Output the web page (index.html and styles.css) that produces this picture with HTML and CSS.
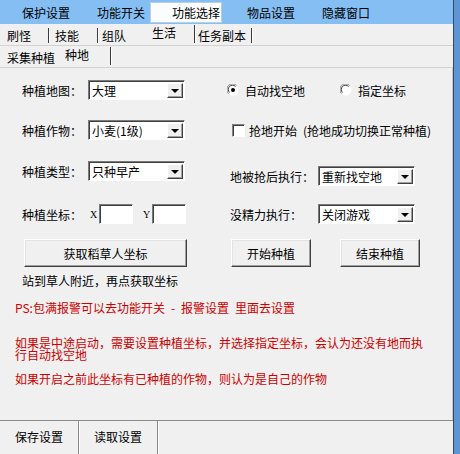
FILE: index.html
```html
<!DOCTYPE html>
<html lang="zh-CN">
<head>
    <meta charset="UTF-8">
    <title>种地</title>
    <link rel="stylesheet" href="styles.css">
</head>
<body>
<div class="frame">
    <div class="app">
        <div class="menubar">
            <span class="menu-item">保护设置</span>
            <span class="menu-item menu-item-tight">功能开关</span>
            <span class="menu-item active">功能选择</span>
            <span class="menu-item">物品设置</span>
            <span class="menu-item">隐藏窗口</span>
        </div>

        <div class="tabrow">
            <span class="tab t1">刷怪</span>
            <span class="tab t2">技能</span>
            <span class="tab t3 no-sep">组队</span>
            <span class="tab t4 selected">生活</span>
            <span class="tab t5">任务副本</span>
        </div>

        <div class="tabrow">
            <span class="tab s1 no-sep">采集种植</span>
            <span class="tab s2 selected">种地</span>
        </div>

        <div class="panel">
            <div class="row r1">
                <div class="cell-left">
                    <span class="label">种植地图：</span>
                    <div class="combo"><span class="combo-text">大理</span><span class="combo-btn"><i class="arrow"></i></span></div>
                </div>
                <div class="cell-right radios">
                    <span class="option">
                        <svg class="radio" width="12" height="12" viewBox="0 0 12 12">
                            <circle cx="6" cy="6" r="5.5" fill="#fff"/>
                            <path d="M1.5 9.5 A5.5 5.5 0 0 1 9.5 1.5" fill="none" stroke="#808080"/>
                            <path d="M2.5 8.5 A4.2 4.2 0 0 1 8.5 2.5" fill="none" stroke="#404040"/>
                            <circle cx="6" cy="6" r="2" fill="#000"/>
                        </svg>
                        自动找空地
                    </span>
                    <span class="option second">
                        <svg class="radio" width="12" height="12" viewBox="0 0 12 12">
                            <circle cx="6" cy="6" r="5.5" fill="#fff"/>
                            <path d="M1.5 9.5 A5.5 5.5 0 0 1 9.5 1.5" fill="none" stroke="#808080"/>
                            <path d="M2.5 8.5 A4.2 4.2 0 0 1 8.5 2.5" fill="none" stroke="#404040"/>
                        </svg>
                        指定坐标
                    </span>
                </div>
            </div>

            <div class="row r2">
                <div class="cell-left">
                    <span class="label">种植作物：</span>
                    <div class="combo"><span class="combo-text">小麦(1级)</span><span class="combo-btn"><i class="arrow"></i></span></div>
                </div>
                <div class="cell-right">
                    <span class="option check">
                        <span class="checkbox"></span>
                        抢地开始&ensp;(抢地成功切换正常种植)
                    </span>
                </div>
            </div>

            <div class="row r3">
                <div class="cell-left">
                    <span class="label">种植类型：</span>
                    <div class="combo"><span class="combo-text">只种早产</span><span class="combo-btn"><i class="arrow"></i></span></div>
                </div>
                <div class="cell-right shift">
                    <span class="label wide">地被抢后执行：</span>
                    <div class="combo"><span class="combo-text">重新找空地</span><span class="combo-btn"><i class="arrow"></i></span></div>
                </div>
            </div>

            <div class="row r4">
                <div class="cell-left">
                    <span class="label">种植坐标：</span>
                    <span class="axis">X</span>
                    <span class="field"></span>
                    <span class="axis axis-y">Y</span>
                    <span class="field"></span>
                </div>
                <div class="cell-right">
                    <span class="label wide">没精力执行：</span>
                    <div class="combo"><span class="combo-text">关闭游戏</span><span class="combo-btn"><i class="arrow"></i></span></div>
                </div>
            </div>

            <div class="row buttons">
                <div class="cell-left">
                    <button class="btn btn-long">获取稻草人坐标</button>
                </div>
                <div class="cell-right">
                    <button class="btn btn-small">开始种植</button>
                    <button class="btn btn-small btn-gap">结束种植</button>
                </div>
            </div>

            <p class="hint">站到草人附近，再点获取坐标</p>

            <div class="notes">
                <p class="note ps">PS:包满报警可以去功能开关&ensp;-&ensp;报警设置&ensp;里面去设置</p>
                <p class="note n2">如果是中途启动，需要设置种植坐标，并选择指定坐标，会认为还没有地而执行自动找空地</p>
                <p class="note n3">如果开启之前此坐标有已种植的作物，则认为是自己的作物</p>
            </div>
        </div>

        <div class="bottombar">
            <span class="bottom-tab">保存设置</span>
            <span class="bottom-tab">读取设置</span>
        </div>
    </div>
    <div class="edge"></div>
</div>
</body>
</html>
```

FILE: styles.css
```css
* {
    margin: 0;
    padding: 0;
    box-sizing: border-box;
}

body {
    font-family: "Noto Sans CJK SC", "Noto Sans", sans-serif;
    font-size: 12px;
    color: #000;
    background: #f0f0f0;
    width: 460px;
    height: 454px;
    overflow: hidden;
}

.frame {
    display: flex;
    width: 460px;
    height: 454px;
}

.app {
    width: 453px;
    display: flex;
    flex-direction: column;
    background: #f0f0f0;
}

.edge {
    width: 7px;
    background: #5f95d3;
    border-left: 1px solid #2f4b6c;
}

/* top menu */
.menubar {
    height: 24px;
    background: #85bef3;
    display: flex;
    align-items: center;
    padding-left: 22px;
}

.menu-item {
    line-height: 21px;
    margin-right: 27px;
}

.menu-item-tight {
    margin-right: 5px;
}

.menu-item.active {
    background: #fbfcfd;
    border: 1px solid #b9cfe4;
    padding: 0 1px 0 21px;
    height: 21px;
    line-height: 19px;
    margin-right: 25px;
}

/* tab rows */
.tabrow {
    height: 22px;
    display: flex;
    align-items: flex-end;
    border-bottom: 1px solid #d2d2d2;
    padding-bottom: 2px;
}

.tab {
    height: 15px;
    line-height: 16px;
    border-right: 1px solid #3a3a3a;
    box-shadow: 1px 0 0 #fff;
}

.tab.no-sep {
    border-right-color: transparent;
    box-shadow: none;
}

.tab.selected {
    height: 18px;
    line-height: 15px;
    padding-bottom: 3px;
}

.t1 { width: 49px; padding-left: 7px; }
.t2 { width: 49px; padding-left: 6px; }
.t3 { width: 49px; padding-left: 4px; }
.t4 { width: 48px; padding-left: 5px; }
.t5 { width: 57px; padding-left: 3px; }

.s1 { width: 62px; padding-left: 7px; }
.s2 { width: 49px; padding-left: 3px; }

/* main panel */
.panel {
    flex: 1;
    padding-top: 12px;
    border-right: 1px solid #c8c8c8;
}

.row {
    display: flex;
    height: 20px;
    padding-left: 22px;
}

.r2 { margin-top: 20px; }
.r3 { margin-top: 21px; }
.r4 { margin-top: 23px; }

.cell-left {
    width: 208px;
    display: flex;
    align-items: center;
}

.cell-right {
    flex: 1;
    display: flex;
    align-items: center;
    height: 20px;
}

.cell-right.shift {
    margin-top: 5px;
}

.label {
    width: 66px;
    white-space: nowrap;
}

.label.wide {
    width: 88px;
}

/* combo box */
.combo {
    width: 97px;
    height: 20px;
    background: #fff;
    border: 1px solid;
    border-color: #7a7a7a #fff #fff #7a7a7a;
    box-shadow: inset 1px 1px 0 #404040;
    display: flex;
    align-items: center;
    justify-content: space-between;
    padding: 2px 1px 1px 3px;
}

.combo-text {
    line-height: 15px;
    white-space: nowrap;
}

.combo-btn {
    width: 16px;
    height: 15px;
    background: #f0f0f0;
    border: 1px solid;
    border-color: #fff #404040 #404040 #fff;
    box-shadow: inset -1px -1px 0 #a0a0a0;
    display: flex;
    align-items: center;
    justify-content: center;
}

.arrow {
    width: 0;
    height: 0;
    border-left: 4px solid transparent;
    border-right: 4px solid transparent;
    border-top: 4px solid #000;
    margin-top: 1px;
}

/* radios and checkbox */
.radios {
    margin-left: -3px;
}

.option {
    display: flex;
    align-items: center;
    white-space: nowrap;
}

.radio {
    margin-right: 6px;
}

.option.second {
    margin-left: 35px;
}

.option.check {
    margin-left: 2px;
}

.checkbox {
    width: 13px;
    height: 13px;
    background: #fff;
    border: 1px solid;
    border-color: #808080 #fff #fff #808080;
    box-shadow: inset 1px 1px 0 #404040;
    margin-right: 4px;
}

/* coordinate inputs */
.axis {
    font-family: "Liberation Serif", serif;
    font-size: 10px;
    width: 11px;
    padding-left: 2px;
}

.axis-y {
    width: 13px;
    padding-left: 4px;
}

.field {
    width: 34px;
    height: 20px;
    background: #fff;
    border: 1px solid;
    border-color: #7a7a7a #fff #fff #7a7a7a;
    box-shadow: inset 1px 1px 0 #404040;
    margin-right: 6px;
}

/* buttons */
.buttons {
    height: 28px;
    margin-top: 15px;
}

.buttons .cell-left,
.buttons .cell-right {
    height: 28px;
}

.btn {
    font-family: inherit;
    font-size: 12px;
    height: 28px;
    background: #f0f0f0;
    border: 1px solid;
    border-color: #fff #404040 #404040 #fff;
    box-shadow: inset -1px -1px 0 #a0a0a0, inset 1px 1px 0 #e3e3e3;
    color: #000;
}

.btn-long {
    width: 163px;
    margin-left: 2px;
}

.btn-small {
    width: 80px;
    margin-left: 1px;
}

.btn-gap {
    margin-left: 29px;
}

.hint {
    padding-left: 22px;
    margin-top: 7px;
    line-height: 14px;
}

/* red notes */
.notes {
    padding-left: 15px;
    width: 430px;
    color: #cc0000;
}

.note.ps {
    margin-top: 13px;
    line-height: 14px;
}

.note.n2 {
    margin-top: 22px;
    line-height: 12px;
}

.note.n3 {
    margin-top: 12px;
    line-height: 12px;
}

/* bottom bar */
.bottombar {
    height: 34px;
    display: flex;
    border-top: 1px solid #8a8a8a;
}

.bottom-tab {
    width: 79px;
    padding-left: 15px;
    line-height: 32px;
    border-right: 1px solid #8a8a8a;
    box-shadow: 1px 0 0 #fff;
}
```
